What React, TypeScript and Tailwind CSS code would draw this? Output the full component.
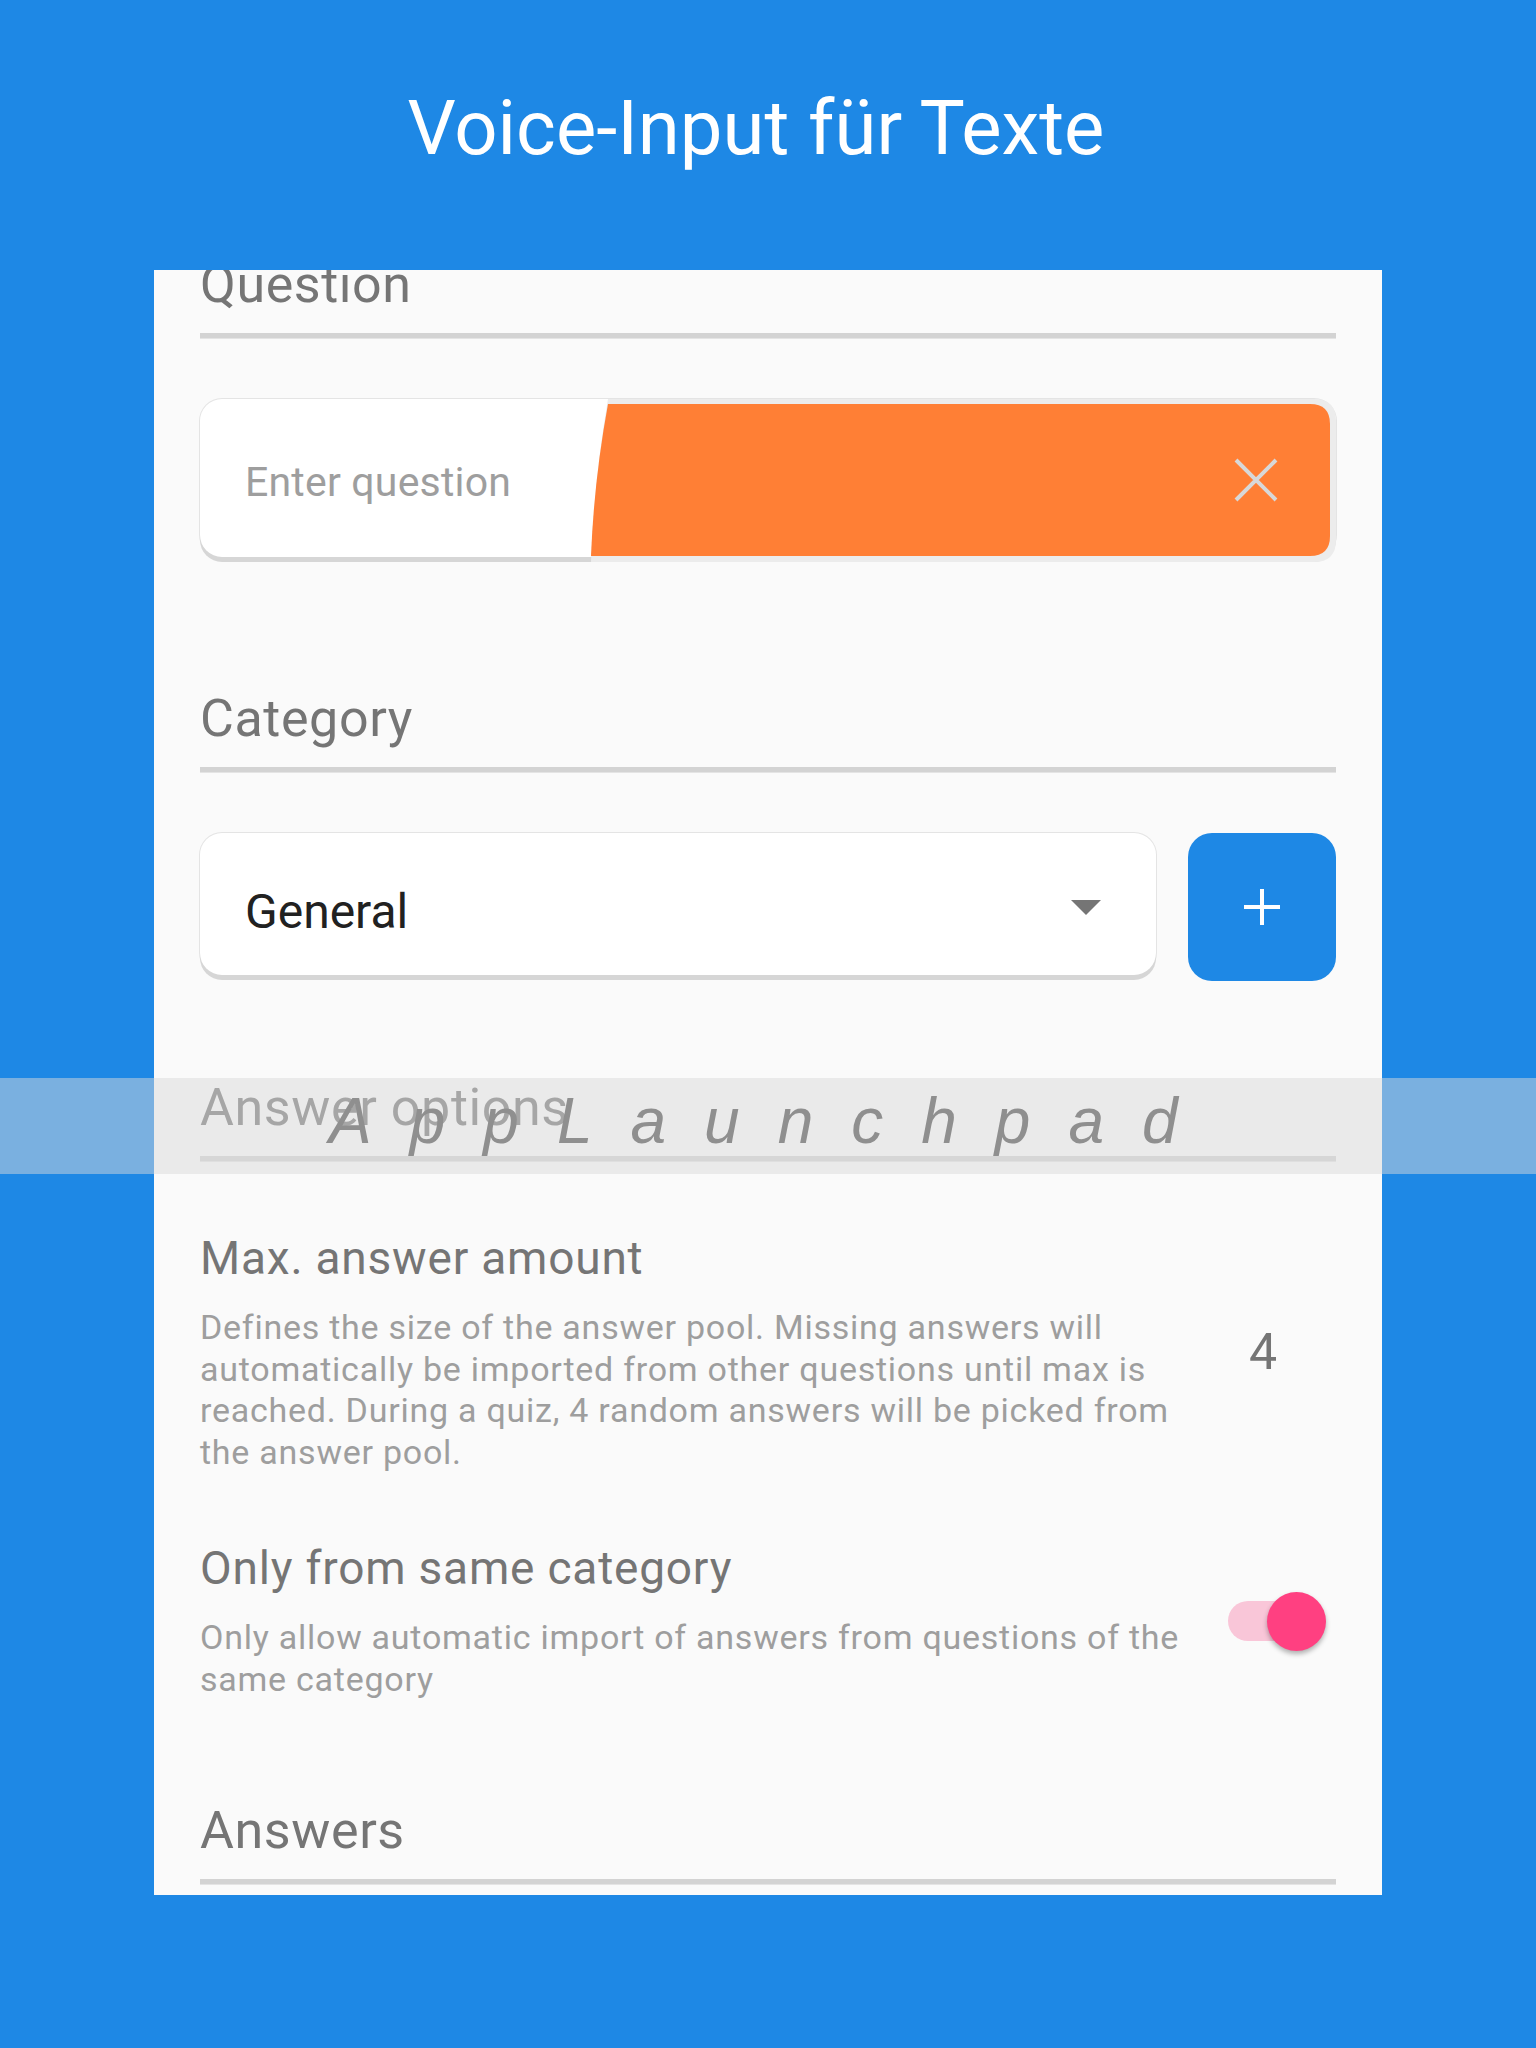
import React from "react";

function Heading({ children }: { children: React.ReactNode }) {
  return (
    <div>
      <div className="text-[52px] leading-[62px] tracking-[0.6px] text-[#757575] whitespace-nowrap">{children}</div>
      <div className="mt-[17px] h-[6px] bg-[#d3d3d3] border-b border-[#e4e4e4]" />
    </div>
  );
}

export default function App() {
  return (
    <div className="relative min-h-[2048px] bg-[#1e88e5] font-['Roboto',sans-serif] overflow-hidden">
      <div className="pt-[78px] pr-[24px] h-[178px] text-center text-white text-[76px] leading-[100px]">
        Voice-Input für Texte
      </div>

      <div className="ml-[154px] mt-[92px] w-[1228px] bg-[#fafafa] overflow-hidden">
        <div className="-mt-[16px] px-[46px] pb-[10px]">
          <Heading>Question</Heading>

          {/* Question input */}
          <div className="relative mt-[60px] h-[158px] rounded-[22px] bg-white shadow-[0_5px_0_0_#d6d6d6,0_0_0_1px_#e4e4e4] flex items-center">
            <div className="pl-[45px] pt-[10px] text-[41px] tracking-[0.2px] text-[#9e9e9e]">Enter question</div>
            <svg
              className="absolute left-0 top-0 overflow-visible"
              width="1136"
              height="163"
              viewBox="0 0 1136 163"
            >
              <path
                d="M408,0 L1114,0 Q1136,0 1136,22 L1136,141 Q1136,163 1114,163 L391,163 Q394,81 408,0 Z"
                fill="#ececec"
              />
              <path
                d="M408,5 L1110,5 Q1130,5 1130,25 L1130,137 Q1130,157 1110,157 L391,157 Q394,81 408,5 Z"
                fill="#ff7f35"
              />
              <path
                d="M1036,61 L1076,101 M1076,61 L1036,101"
                stroke="#d8d8d8"
                strokeWidth="4"
                strokeLinecap="butt"
              />
            </svg>
          </div>

          <div className="mt-[131px]">
            <Heading>Category</Heading>
          </div>

          {/* Category row */}
          <div className="mt-[60px] flex gap-[32px]">
            <div className="w-[956px] h-[142px] rounded-[22px] bg-white shadow-[0_5px_0_0_#d6d6d6,0_0_0_1px_#e4e4e4] flex items-center justify-between pl-[45px] pr-[55px]">
              <div className="pt-[15px] text-[48px] text-[#212121]">General</div>
              <svg width="30" height="15" viewBox="0 0 30 15" className="mt-[6px]">
                <polygon points="0,0 30,0 15,15" fill="#757575" />
              </svg>
            </div>
            <div className="w-[148px] h-[148px] rounded-[24px] bg-[#1e88e5] flex items-center justify-center">
              <svg width="38" height="38" viewBox="0 0 38 38">
                <path d="M19,1 L19,37 M1,19 L37,19" stroke="#ffffff" strokeWidth="4" />
              </svg>
            </div>
          </div>

          <div className="mt-[96px]">
            <Heading>Answer options</Heading>
          </div>

          {/* Max answer amount */}
          <div className="mt-[70px] flex items-center">
            <div className="w-[990px]">
              <div className="text-[46px] leading-[52px] tracking-[0.8px] text-[#757575]">Max. answer amount</div>
              <div className="mt-[23px] text-[34px] leading-[41.5px] tracking-[0.75px] text-[#9e9e9e]">
                Defines the size of the answer pool. Missing answers will automatically be imported from other
                questions until max is reached. During a quiz, 4 random answers will be picked from the answer pool.
              </div>
            </div>
            <div className="w-[146px] flex justify-center text-[50px] text-[#757575]">4</div>
          </div>

          {/* Only from same category */}
          <div className="mt-[69px] flex items-center">
            <div className="w-[990px]">
              <div className="text-[46px] leading-[52px] tracking-[0.8px] text-[#757575]">Only from same category</div>
              <div className="mt-[23px] text-[34px] leading-[41.5px] tracking-[0.75px] text-[#9e9e9e]">
                Only allow automatic import of answers from questions of the same category
              </div>
            </div>
            <div className="w-[146px] flex justify-end pr-[10px]">
              <div className="relative w-[98px] h-[59px] flex items-center">
                <div className="w-[94px] h-[40px] rounded-full bg-[#f9c6d8]" />
                <div className="absolute right-0 top-0 w-[59px] h-[59px] rounded-full bg-[#ff4081] shadow-[0_3px_5px_rgba(0,0,0,0.3)]" />
              </div>
            </div>
          </div>

          <div className="mt-[100px]">
            <Heading>Answers</Heading>
          </div>
        </div>
      </div>

      {/* Watermark band */}
      <div className="absolute left-0 right-0 top-[1078px] h-[96px] bg-[rgba(219,219,219,0.49)]">
        <div className="pl-[329px] leading-[86px] text-[64px] italic tracking-[38px] text-[#8f8f8f] font-['Liberation_Sans',sans-serif] whitespace-nowrap">
          AppLaunchpad
        </div>
      </div>
    </div>
  );
}
